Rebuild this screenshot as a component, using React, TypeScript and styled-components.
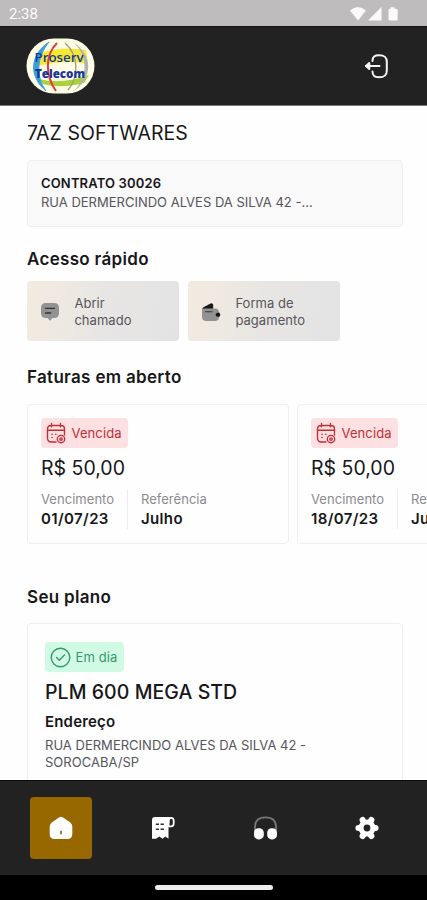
import React from 'react';
import styled, { createGlobalStyle } from 'styled-components';

const Global = createGlobalStyle`
  * { box-sizing: border-box; }
  body { margin: 0; background: #fefefe; font-family: Inter, sans-serif; color: #17171a; }
`;

const Screen = styled.div`
  width: 427px;
  height: 900px;
  display: flex;
  flex-direction: column;
  overflow: hidden;
  background: #fefefe;
`;
const StatusBar = styled.div`
  flex: 0 0 27px;
  display: flex;
  align-items: center;
  justify-content: space-between;
  padding: 2px 28px 0 9px;
  background: #bfbcbd;
  border-bottom: 1px solid #111;
  color: #fafafa;
  font: 400 15px/24px Roboto, sans-serif;
`;
const StatusIcons = styled.svg`
  display: block;
`;
const Header = styled.header`
  flex: 0 0 79px;
  display: flex;
  align-items: center;
  justify-content: space-between;
  padding: 0 38px 0 26px;
  background: #222;
  border-bottom: 1px solid #777;
`;
const Content = styled.main`
  flex: 1 1 0;
  min-height: 0;
  overflow: hidden;
  padding: 16px 24px 0 27px;
`;
const Customer = styled.h1`
  margin: 0;
  font-size: 19.5px;
  line-height: 22px;
  font-weight: 400;
  letter-spacing: 0.07px;
`;
const ContractCard = styled.section`
  height: 67px;
  margin-top: 16px;
  padding: 13px;
  background: #f9f9f9;
  border: 1px solid #f0f0f0;
  border-radius: 4px;
  font-size: 13px;
  line-height: 19px;
  color: #55555a;
`;
const ContractName = styled.div`
  font-weight: 600;
  letter-spacing: 0.15px;
  color: #17171a;
`;
const SectionTitle = styled.h2<{ $top: number; $bottom: number }>`
  margin: ${p => p.$top}px 0 ${p => p.$bottom}px;
  font-size: 17px;
  line-height: 20px;
  font-weight: 600;
  letter-spacing: 0.32px;
`;
const QuickRow = styled.div`
  display: flex;
  gap: 9px;
`;
const QuickCard = styled.button`
  width: 152px;
  height: 60px;
  display: flex;
  align-items: center;
  gap: 14.4px;
  padding: 1px 13px 0;
  border: 0;
  border-radius: 4px;
  background: linear-gradient(100deg, #f3ebdf 0%, #e8e6e4 50%, #e3e3e4 100%);
  font: 400 13px/17px Inter, sans-serif;
  letter-spacing: 0.04px;
  color: #56565a;
  text-align: left;
`;
const InvoiceRow = styled.div`
  display: flex;
  gap: 8px;
  margin-right: -24px;
  overflow: hidden;
`;
const InvoiceCard = styled.article`
  flex: 0 0 262px;
  height: 140px;
  padding: 13px;
  border: 1px solid #efefef;
  border-radius: 4px;
`;
const Badge = styled.div<{ $tone: 'late' | 'ok' }>`
  display: flex;
  width: ${p => (p.$tone === 'late' ? 87 : 79)}px;
  height: 30px;
  align-items: center;
  gap: ${p => (p.$tone === 'late' ? 5.5 : 4.5)}px;
  padding-left: 5px;
  border-radius: 4px;
  background: ${p => (p.$tone === 'late' ? '#fde0e1' : '#d1fae5')};
  color: ${p => (p.$tone === 'late' ? '#bd3038' : '#36986c')};
  font-size: 13px;
  letter-spacing: 0.1px;
  white-space: nowrap;
`;
const Price = styled.div`
  margin-top: 8px;
  font-size: 19.5px;
  line-height: 24px;
`;
const Details = styled.div`
  display: flex;
  height: 40px;
  margin-top: 9px;
`;
const Detail = styled.div`
  padding-right: 13px;
  line-height: 20px;
  & + & {
    padding-left: 12.8px;
    border-left: 1px solid #ededed;
  }
`;
const Label = styled.div`
  font-size: 13px;
  letter-spacing: 0.04px;
  color: #8b8b8f;
`;
const Value = styled.div`
  font-size: 15px;
  font-weight: 600;
  letter-spacing: 0.38px;
`;
const PlanCard = styled.article`
  height: 220px;
  padding: 18px 17px;
  border: 1px solid #efefef;
  border-radius: 4px;
  width: 376px;
`;
const PlanName = styled.div`
  margin-top: 8px;
  font-size: 19.5px;
  line-height: 24px;
  font-weight: 500;
  letter-spacing: 0.06px;
`;
const PlanLabel = styled.div`
  margin-top: 8px;
  font-size: 15px;
  line-height: 20px;
  font-weight: 600;
  letter-spacing: 0.17px;
`;
const PlanAddress = styled.div`
  width: 280px;
  margin-top: 5px;
  font-size: 13px;
  line-height: 17px;
  letter-spacing: 0.02px;
  color: #55555a;
`;
const Nav = styled.nav`
  flex: 0 0 95px;
  display: flex;
  justify-content: space-between;
  padding: 16px 29px 0 30px;
  background: #222;
  border-top: 1px solid #0a0a0a;
`;
const NavButton = styled.button<{ $active?: boolean }>`
  width: 62px;
  height: 62px;
  display: grid;
  place-items: center;
  padding: 0;
  border: 0;
  border-radius: 4px;
  background: ${p => (p.$active ? '#976800' : 'transparent')};
`;
const GestureBar = styled.div`
  flex: 0 0 25px;
  display: flex;
  justify-content: center;
  padding-top: 10px;
  background: #000;
`;
const GesturePill = styled.div`
  width: 118px;
  height: 5px;
  border-radius: 3px;
  background: #ececec;
`;

const Logo = () => (
  <svg width="69" height="57" viewBox="0 0 69 57">
    <defs>
      <clipPath id="globe"><rect x="1" y="1" width="67" height="54" rx="27" /></clipPath>
    </defs>
    <rect x="0.5" y="0.5" width="68" height="55" rx="27.5" fill="#fffde6" />
    <g clipPath="url(#globe)" fill="none">
      <path d="M17 14 Q38 8 60 12 L62 26 Q38 21 8 29Z" fill="#f5e934" />
      <path d="M13 41 Q36 47 63 37 L58 45 Q34 51 17 46Z" fill="#a8d13c" />
      <path d="M23 4 C3 17 3 39 20 53 C10 39 10 20 23 4Z" fill="#3aa0da" stroke="#3aa0da" strokeWidth="1" />
      <path d="M31 5 C18 18 20 39 30 53" stroke="#e23a3e" strokeWidth="2" />
      <path d="M39 5 C54 18 52 40 42 52" stroke="#9c9a87" strokeWidth="1.3" />
      <path d="M48 5 C67 17 67 40 48 53 C62 39 62 18 48 5Z" fill="#b3b3b3" />
    </g>
    <g fontFamily="'Open Sans', 'Noto Sans', sans-serif" fontWeight="700" fill="#17379b" fontSize="12.5">
      <text x="8.5" y="24" fontWeight="600" textLength="49" lengthAdjust="spacingAndGlyphs">Proserv</text>
      <text x="9" y="39.5" fontWeight="800" textLength="50" lengthAdjust="spacingAndGlyphs">Telecom</text>
    </g>
  </svg>
);
const LogoutIcon = () => (
  <svg width="25" height="26" viewBox="0 0 25 26" fill="none" stroke="#f5f5f5" strokeWidth="2" strokeLinecap="round" strokeLinejoin="round">
    <path d="M8.5 8C8.5 3.5 10.5 2.3 15 2.3C20.5 2.3 22.8 4 22.8 9V17.5C22.8 22.5 20.5 24.2 15 24.2C10.5 24.2 8.5 23 8.5 18.5" />
    <path d="M15.5 13H2" />
    <path d="M5.3 10L2 13L5.3 16Z" fill="#f5f5f5" />
  </svg>
);
const ChatIcon = () => (
  <svg width="20" height="20" viewBox="0 0 20 20">
    <path d="M6 1H14Q19 1 19 6V11Q19 16 14 16H12.5L10 18.7L7.5 16H6Q1 16 1 11V6Q1 1 6 1Z" fill="#929292" />
    <path d="M5.5 6.3H14.5M5.5 11H10.7" stroke="#333" strokeWidth="1.3" strokeLinecap="round" />
  </svg>
);
const WalletIcon = () => (
  <svg width="20" height="20" viewBox="0 0 20 20">
    <path d="M1 8Q1 5.5 4 4.5L9 1.8Q11.8.5 12.2 3V7H4Z" fill="#171717" />
    <path d="M1 6.5H14Q18 6.5 18 10.5V15Q18 19 14 19H5.5Q1 19 1 15Z" fill="#929292" />
    <path d="M4.5 9.8H11" stroke="#333" strokeWidth="1.1" strokeLinecap="round" />
    <path d="M18.5 10.8Q20 12.8 18.5 14.8H16.8Q14.6 14.8 14.6 12.8Q14.6 10.8 16.8 10.8Z" fill="#171717" />
  </svg>
);
const CalendarIcon = () => (
  <svg width="20" height="22" viewBox="0 0 20 22" fill="none" stroke="#bd3038" strokeWidth="1.35" strokeLinecap="round">
    <path d="M10 20H5.5Q1.5 20 1.5 16V7Q1.5 3.5 5 3.5H15Q18.5 3.5 18.5 7V13M1.5 8.2H18.5M5.5 1.3V4.8M14.5 1.3V4.8" />
    <circle cx="15" cy="17" r="3.7" />
    <circle cx="15" cy="17" r="1.2" />
    <path d="M6 12.2H6.1M9.8 12.2H9.9M6 15.5H6.1" strokeWidth="1.6" />
  </svg>
);
const CheckIcon = () => (
  <svg width="21" height="21" viewBox="0 0 21 21" fill="none" stroke="#36986c" strokeWidth="1.4" strokeLinecap="round" strokeLinejoin="round">
    <circle cx="10.5" cy="10.5" r="9.3" />
    <path d="M6.6 10.6L9.3 13.2L14.5 8" />
  </svg>
);
const HomeIcon = () => (
  <svg width="24" height="24" viewBox="0 0 24 24">
    <path d="M10 1.5Q12 0 14 1.5L21 6.2Q23.3 8 23.3 10.5V18Q23.3 23 18.5 23H5.5Q.7 23 .7 18V10.5Q.7 8 3 6.2Z" fill="#fff" />
    <path d="M12 14.8V18.2" stroke="#6d552a" strokeWidth="1.5" />
  </svg>
);
const ReceiptIcon = () => (
  <svg width="24" height="24" viewBox="0 0 24 24">
    <path d="M4 1H20Q17.5 1.5 17.5 5V22.8L14.4 20.6L11.5 22.8L8.3 20.6L5 22.8L1 22.8V4Q1 1 4 1Z" fill="#fff" />
    <path d="M17.5 10.3H20Q22.7 10.3 22.7 7.5V4.5Q22.7 1.8 20 1.8Q17.8 1.8 17.8 5Z" fill="none" stroke="#fff" strokeWidth="1.8" />
    <path d="M4.8 8.3H8M9.5 8.3H13M4.8 13.3H8M9.5 13.3H13" stroke="#333" strokeWidth="1.4" />
  </svg>
);
const HeadsetIcon = () => (
  <svg width="25" height="24" viewBox="0 0 25 24">
    <path d="M2 15V11Q2 1.3 12.5 1.3Q23 1.3 23 11V15" fill="none" stroke="#777" strokeWidth="1.8" />
    <rect x="1" y="12.2" width="9.8" height="11.2" rx="4.5" fill="#fff" />
    <rect x="14.2" y="12.2" width="9.8" height="11.2" rx="4.5" fill="#fff" />
  </svg>
);
const GearIcon = () => (
  <svg width="24" height="24" viewBox="0 0 24 24">
    <g fill="none" stroke="#fff" strokeLinecap="round">
      <circle cx="12" cy="12" r="6" strokeWidth="5.2" />
      <path strokeWidth="6" d="M3.8 12h-.4M20.2 12h.4M8 4.6l-.4-.6M16 4.6l.4-.6M8 19.4l-.4.6M16 19.4l.4.6" />
    </g>
  </svg>
);

const invoices = [
  { amount: 'R$ 50,00', due: '01/07/23', month: 'Julho' },
  { amount: 'R$ 50,00', due: '18/07/23', month: 'Julho' },
];

export default function App() {
  return (
    <Screen>
      <Global />
      <StatusBar>
        <span>2:38</span>
        <StatusIcons width="50" height="16" viewBox="0 0 50 16" fill="#fafafa">
          <path d="M1 4.5Q9 -2.5 17 4.5L9 14.5Z" />
          <path d="M32.5 1V14.5H19Z" />
          <path d="M41.5 1.2H45.5V2.7H47Q48.7 2.7 48.7 4.2V13Q48.7 14.5 47.2 14.5H41Q39.5 14.5 39.5 13V4.2Q39.5 2.7 41 2.7H41.5Z" />
        </StatusIcons>
      </StatusBar>
      <Header>
        <Logo />
        <LogoutIcon />
      </Header>
      <Content>
        <Customer>7AZ SOFTWARES</Customer>
        <ContractCard>
          <ContractName>CONTRATO 30026</ContractName>
          <div>RUA DERMERCINDO ALVES DA SILVA 42 -...</div>
        </ContractCard>
        <SectionTitle $top={22} $bottom={12}>Acesso rápido</SectionTitle>
        <QuickRow>
          <QuickCard><ChatIcon /><span>Abrir<br />chamado</span></QuickCard>
          <QuickCard><WalletIcon /><span>Forma de<br />pagamento</span></QuickCard>
        </QuickRow>
        <SectionTitle $top={26} $bottom={17}>Faturas em aberto</SectionTitle>
        <InvoiceRow>
          {invoices.map(i => (
            <InvoiceCard key={i.due}>
              <Badge $tone="late"><CalendarIcon />Vencida</Badge>
              <Price>{i.amount}</Price>
              <Details>
                <Detail><Label>Vencimento</Label><Value>{i.due}</Value></Detail>
                <Detail><Label>Referência</Label><Value>{i.month}</Value></Detail>
              </Details>
            </InvoiceCard>
          ))}
        </InvoiceRow>
        <SectionTitle $top={43} $bottom={16}>Seu plano</SectionTitle>
        <PlanCard>
          <Badge $tone="ok"><CheckIcon />Em dia</Badge>
          <PlanName>PLM 600 MEGA STD</PlanName>
          <PlanLabel>Endereço</PlanLabel>
          <PlanAddress>RUA DERMERCINDO ALVES DA SILVA 42 - SOROCABA/SP</PlanAddress>
        </PlanCard>
      </Content>
      <Nav>
        <NavButton $active aria-label="Início"><HomeIcon /></NavButton>
        <NavButton aria-label="Faturas"><ReceiptIcon /></NavButton>
        <NavButton aria-label="Suporte"><HeadsetIcon /></NavButton>
        <NavButton aria-label="Ajustes"><GearIcon /></NavButton>
      </Nav>
      <GestureBar><GesturePill /></GestureBar>
    </Screen>
  );
}
